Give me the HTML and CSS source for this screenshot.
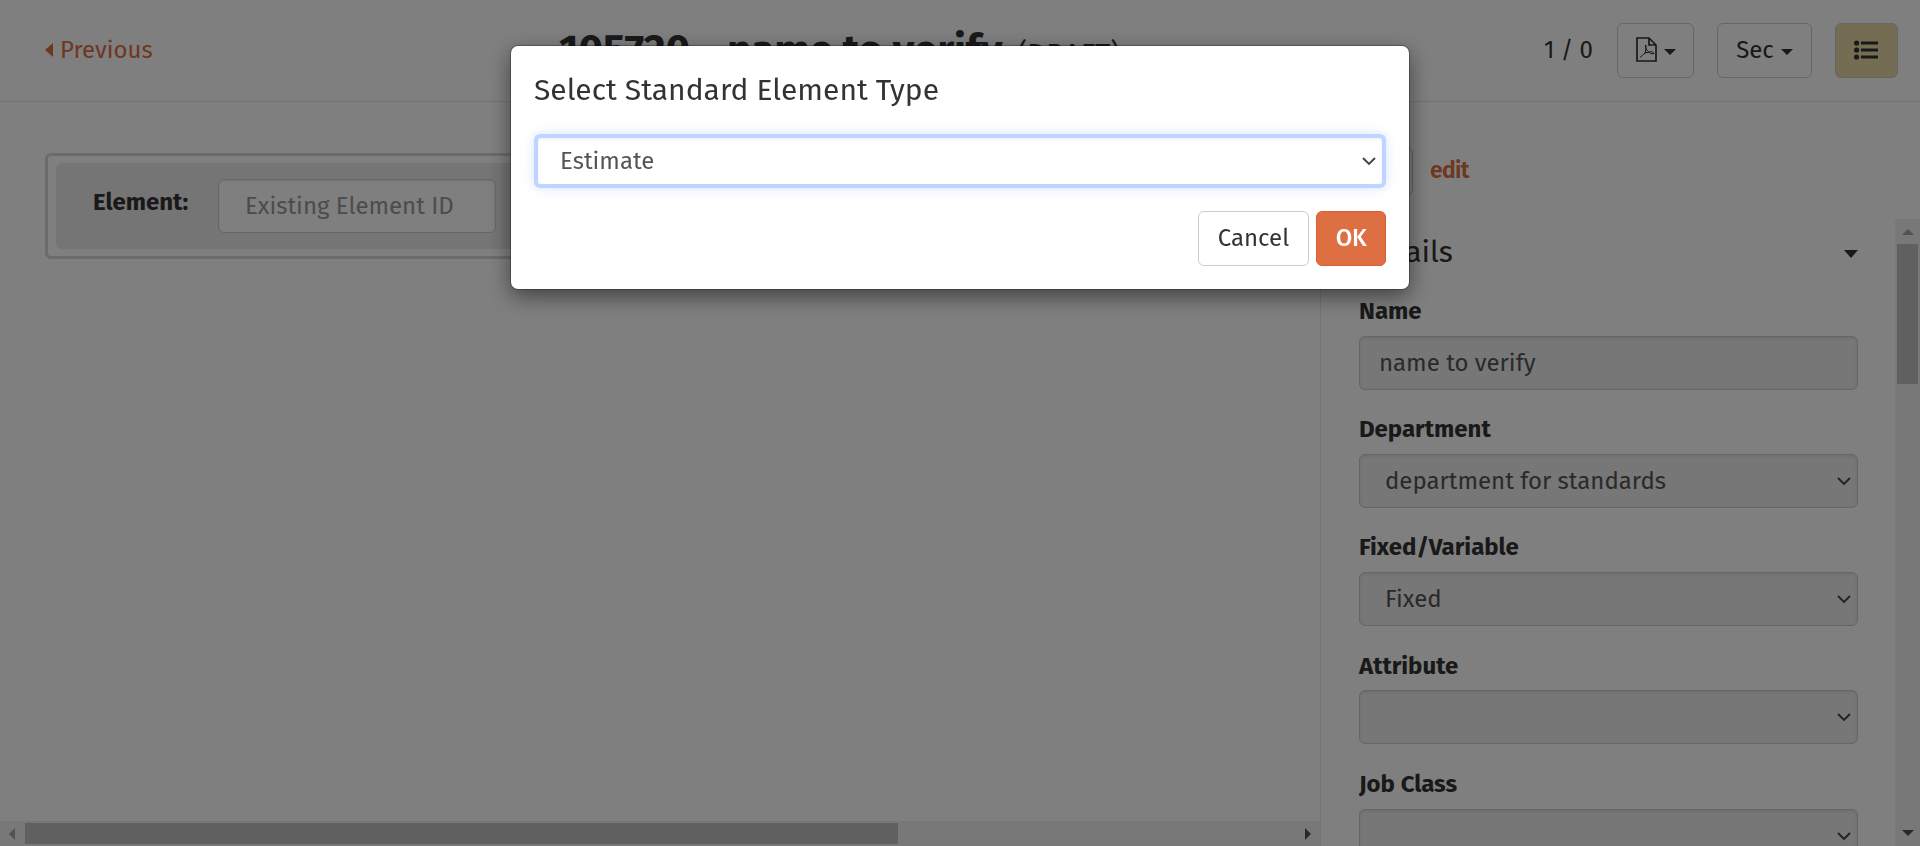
FILE: index.html
```html
<!DOCTYPE html>
<html lang="en">
<head>
<meta charset="utf-8">
<title>Standard</title>
<link rel="stylesheet" href="styles.css">
</head>
<body>
<div class="app">
  <header class="topbar">
    <a class="previous"><svg class="left-caret" viewBox="0 0 8 14"><path d="M8 0v14L0 7z"/></svg><span>Previous</span></a>
    <h1 class="title"><span class="title-name">105720 - name to verify</span> <small>(DRAFT)</small></h1>
    <div class="tools">
      <span class="pager">1 / 0</span>
      <button class="btn pdf-btn">
        <svg class="pdf" viewBox="0 0 21 25"><path d="M1 1h12l7 7v16H1zM13 1v7h7"/><path class="thin" d="M4 20.5l5-4.500 7-1.500 2 2-3 .3-4-3.300-1.500-3v-2.500M10 8v3l-1 5.500"/></svg>
        <i class="caret"></i>
      </button>
      <button class="btn sec-btn"><span>Sec</span><i class="caret"></i></button>
      <button class="btn list-btn"><svg class="list" viewBox="0 0 24 20"><circle cx="2.6" cy="3" r="2.6"/><circle cx="2.6" cy="10" r="2.6"/><circle cx="2.6" cy="17" r="2.6"/><path d="M7 1.500h17v3H7zM7 8.500h17v3H7zM7 15.500h17v3H7z"/></svg></button>
    </div>
  </header>
  <div class="body">
    <main class="main">
      <div class="canvas">
        <section class="element-frame"><div class="element-row">
          <label class="element-label">Element:</label>
          <div class="input element-input">Existing Element ID</div>
        </div></section>
      </div>
      <div class="hbar"><i class="arrow arrow-left"></i><div class="htrack"><div class="hthumb"></div></div><i class="arrow arrow-right"></i></div>
    </main>
    <aside class="side">
      <div class="side-head"><div class="input id-input"></div><a class="edit">edit</a></div>
      <div class="side-scroll">
        <div class="form">
          <div class="section-head"><h2>Details</h2><svg class="section-caret" viewBox="0 0 14 8"><path d="M0 0h14L7 8z"/></svg></div>
          <div class="field"><label>Name</label><div class="input disabled"><span>name to verify</span></div></div>
          <div class="field"><label>Department</label><div class="input disabled select"><span>department for standards</span><svg class="chev" viewBox="0 0 14 9"><path d="M1 1l6 6 6-6"/></svg></div></div>
          <div class="field"><label>Fixed/Variable</label><div class="input disabled select"><span>Fixed</span><svg class="chev" viewBox="0 0 14 9"><path d="M1 1l6 6 6-6"/></svg></div></div>
          <div class="field"><label>Attribute</label><div class="input disabled select"><span></span><svg class="chev" viewBox="0 0 14 9"><path d="M1 1l6 6 6-6"/></svg></div></div>
          <div class="field"><label>Job Class</label><div class="input disabled select"><span></span><svg class="chev" viewBox="0 0 14 9"><path d="M1 1l6 6 6-6"/></svg></div></div>
        </div>
        <div class="vbar"><i class="arrow arrow-up"></i><div class="vtrack"><div class="vthumb"></div></div><i class="arrow arrow-down"></i></div>
      </div>
    </aside>
  </div>
</div>
<div class="backdrop">
  <div class="modal">
    <h3>Select Standard Element Type</h3>
    <div class="input select focused"><span>Estimate</span><svg class="chev" viewBox="0 0 14 9"><path d="M1 1l6 6 6-6"/></svg></div>
    <div class="actions"><button class="btn cancel">Cancel</button><button class="btn ok">OK</button></div>
  </div>
</div>
</body>
</html>
```
FILE: styles.css
```css
* { box-sizing: border-box; }
body { margin: 0; font: 24px/34px "Fira Sans", "Noto Sans", sans-serif; color: #333; background: #fff; overflow: hidden; }
h1, h2, h3 { margin: 0; }
button { font: inherit; color: inherit; padding: 0; }
.app { height: 846px; display: flex; flex-direction: column; }

.topbar { height: 102px; flex: none; border-bottom: 1px solid #e7e7e7; display: grid; grid-template-columns: 514px 1fr 360px; align-items: center; padding: 0 22px 0 45px; }
.previous { color: #dd6f42; display: flex; align-items: center; gap: 7px; margin-top: -2px; }
.left-caret { width: 8px; height: 14px; fill: currentColor; }
.title { font-size: 42px; line-height: 48px; font-weight: 700; white-space: nowrap; display: flex; gap: 15px; align-items: baseline; padding-top: 4px; }
.title small { font-size: 29.4px; font-weight: 400; }
.tools { display: flex; align-items: center; justify-content: flex-end; }
.pager { margin: -2px 24px 0 0; white-space: nowrap; }
.btn { flex: none; height: 55px; border: 1px solid #ccc; border-radius: 6px; background: #fff; display: flex; align-items: center; justify-content: center; padding-bottom: 2px; }
.pdf-btn { width: 77px; gap: 7px; margin-right: 23px; }
.sec-btn { width: 95px; gap: 7px; margin-right: 23px; }
.list-btn { width: 63px; background: #ead9a8; padding-right: 2px; }
.caret { border: 6px solid transparent; border-top-color: #333; border-bottom: 0; margin-top: 4px; }
.pdf { width: 21px; height: 25px; fill: none; stroke: #333; stroke-width: 1.7; }
.pdf .thin { stroke-width: 1; }
.list { width: 24px; height: 20px; fill: #333; }

.body { flex: 1; min-height: 0; display: flex; }
.main { width: 1320px; display: flex; flex-direction: column; }
.canvas { flex: 1; padding: 51px 0 0 45px; overflow: hidden; }
.element-frame { width: 1600px; height: 106px; border: 3px solid #d6d6d6; border-radius: 6px; padding: 7px 8px; }
.element-row { height: 86px; background: #ebebeb; border-radius: 6px; display: flex; align-items: center; padding-left: 37px; }
.element-label { width: 125px; font-weight: 700; margin-top: -8px; }
.input { height: 54px; border: 1px solid #ccc; border-radius: 6px; box-shadow: inset 0 1px 3px rgba(0,0,0,.1); background: #fff; color: #555; display: flex; align-items: center; white-space: nowrap; }
.element-input { width: 278px; padding-left: 26px; color: #999; }
.hbar { height: 25px; background: #f1f1f1; display: flex; align-items: center; justify-content: space-between; padding: 0 9px; }
.htrack { flex: 1; margin: 0 10px; }
.hthumb { width: 873px; height: 21px; background: #c1c1c1; }
.arrow { flex: none; border: 6px solid transparent; }
.arrow-left { border-right-color: #a3a3a3; border-left: 0; }
.arrow-right { border-left-color: #505050; border-right: 0; }
.arrow-up { border-bottom-color: #a3a3a3; border-top: 0; }
.arrow-down { border-top-color: #505050; border-bottom: 0; }

.side { width: 600px; border-left: 1px solid #e7e7e7; display: flex; flex-direction: column; }
.side-head { height: 117px; padding: 45px 0 0 38px; display: flex; align-items: flex-start; gap: 17px; }
.id-input { width: 54px; height: 49px; }
.edit { color: #dd6f42; font-weight: 600; font-size: 23px; letter-spacing: -.7px; margin-top: 6px; }
.side-scroll { flex: 1; min-height: 0; display: flex; }
.form { flex: 1; overflow: hidden; padding: 12px 37px 0 38px; }
.section-head { height: 42px; display: flex; align-items: center; justify-content: space-between; }
.section-head h2 { font-size: 30px; font-weight: 400; padding-bottom: 1px; }
.section-caret { width: 14px; height: 8px; fill: #333; margin-top: 3px; }
.field { height: 118px; }
.field:nth-child(2) { margin-top: 20px; }
.field:nth-child(6) { margin-top: 1px; }
.field label { display: block; height: 43px; line-height: 36px; font-weight: 700; }
.field:nth-child(5) label { line-height: 38px; }
.disabled { background: #eee; padding-left: 19px; }
.select { justify-content: space-between; padding: 0 6px 0 25px; }
.chev { width: 14px; height: 9px; fill: none; stroke: #444; stroke-width: 1.9; }
.vbar { width: 25px; background: #f1f1f1; display: flex; flex-direction: column; align-items: center; padding: 10px 0; }
.vtrack { flex: 1; padding-top: 9px; }
.vthumb { width: 21px; height: 140px; background: #c1c1c1; }

.backdrop { position: fixed; inset: 0; background: rgba(0,0,0,.5); display: flex; justify-content: center; align-items: flex-start; padding-top: 46px; }
.modal { width: 898px; height: 243px; border-radius: 7px; background: #fff; box-shadow: 0 0 0 1px rgba(0,0,0,.25), 0 7px 22px rgba(0,0,0,.5); padding: 23px 23px 22px; }
.modal h3 { font-size: 30px; line-height: 42px; font-weight: 400; }
.focused { margin-top: 23px; border: 4px solid #bfd5ff; box-shadow: 0 0 12px rgba(150,185,255,.4), inset 0 1px 3px rgba(0,0,0,.08); padding: 0 6px 0 22px; }
.actions { margin-top: 23px; display: flex; justify-content: flex-end; gap: 7px; }
.cancel { width: 111px; }
.ok { width: 70px; color: #fff; background: #dd6f42; border-color: #d95f2c; font-weight: 500; letter-spacing: -.4px; }
```
